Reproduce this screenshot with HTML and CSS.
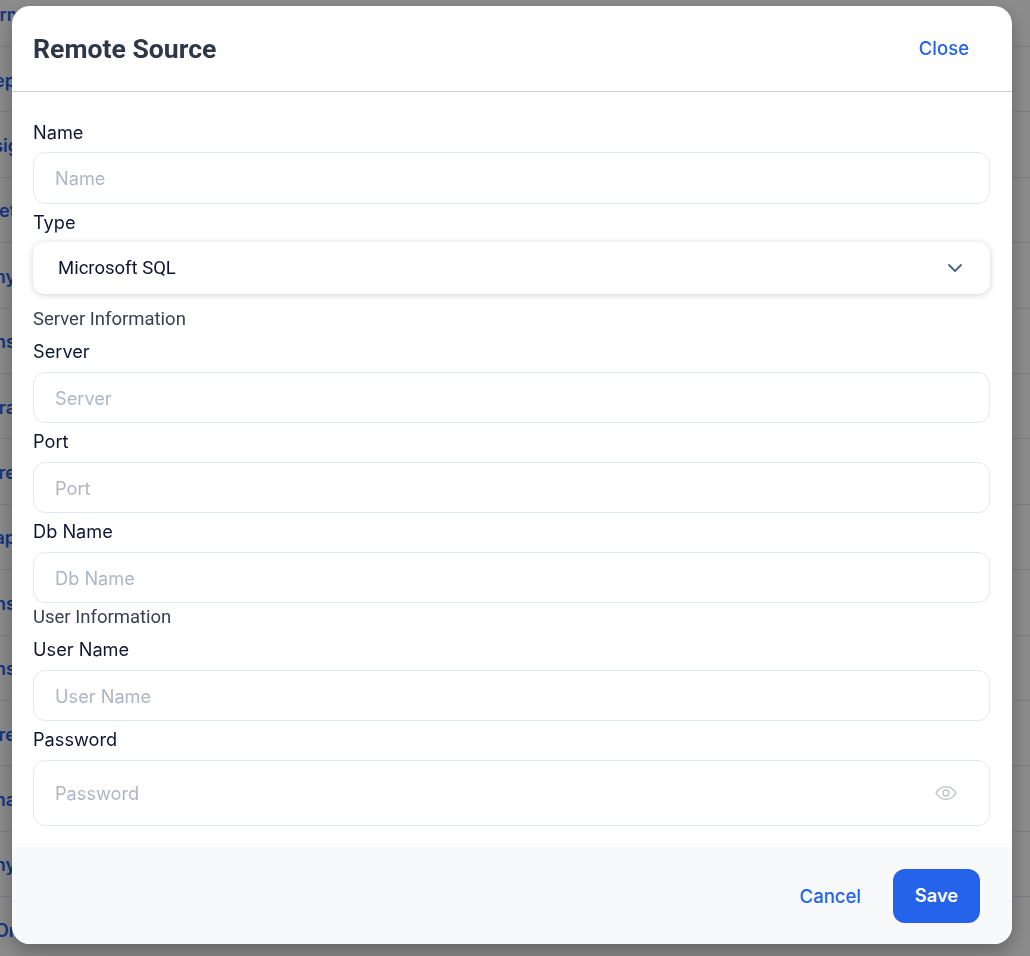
FILE: index.html
```html
<!DOCTYPE html>
<html lang="en">
<head>
    <meta charset="UTF-8">
    <meta name="viewport" content="width=device-width, initial-scale=1.0">
    <title>Remote Source</title>
    <link rel="stylesheet" href="styles.css">
</head>
<body>
    <div class="list">
        <div class="list-row first"><span class="cut">rm</span></div>
        <div class="list-row"><span class="cut">ep</span></div>
        <div class="list-row"><span class="cut wide">sig</span></div>
        <div class="list-row"><span class="cut">et</span></div>
        <div class="list-row"><span class="cut">ny</span></div>
        <div class="list-row"><span class="cut">ns</span></div>
        <div class="list-row"><span class="cut">ra</span></div>
        <div class="list-row"><span class="cut">re</span></div>
        <div class="list-row"><span class="cut">ap</span></div>
        <div class="list-row"><span class="cut">ns</span></div>
        <div class="list-row"><span class="cut">ns</span></div>
        <div class="list-row"><span class="cut">re</span></div>
        <div class="list-row"><span class="cut">na</span></div>
        <div class="list-row"><span class="cut">ny</span></div>
        <div class="list-row"><span class="cut">Or</span></div>
    </div>

    <div class="overlay">
        <div class="modal">
            <div class="modal-header">
                <h2>Remote Source</h2>
                <button class="link close">Close</button>
            </div>
            <div class="modal-body">
                <label class="label">Name</label>
                <input class="field" type="text" placeholder="Name">
                <label class="label">Type</label>
                <div class="select">
                    <span>Microsoft SQL</span>
                    <svg width="16" height="16" viewBox="0 0 16 16" fill="none" stroke="#4a6284" stroke-width="1.8" stroke-linecap="round" stroke-linejoin="round"><path d="M2 5l6 6 6-6"/></svg>
                </div>
                <div class="section">Server Information</div>
                <label class="label">Server</label>
                <input class="field short" type="text" placeholder="Server">
                <label class="label">Port</label>
                <input class="field short" type="text" placeholder="Port">
                <label class="label">Db Name</label>
                <input class="field short" type="text" placeholder="Db Name">
                <div class="section tight">User Information</div>
                <label class="label">User Name</label>
                <input class="field short" type="text" placeholder="User Name">
                <label class="label">Password</label>
                <div class="password">
                    <span>Password</span>
                    <svg width="22" height="16" viewBox="0 0 22 16" fill="none" stroke="#bfc3cb" stroke-width="1.4"><path d="M1 8c2.500-4.200 5.800-6.300 10-6.300S18.500 3.800 21 8c-2.500 4.200-5.800 6.300-10 6.300S3.500 12.200 1 8z"/><circle cx="11" cy="8" r="3"/></svg>
                </div>
            </div>
            <div class="modal-footer">
                <button class="link">Cancel</button>
                <button class="save">Save</button>
            </div>
        </div>
    </div>
</body>
</html>
```

FILE: styles.css
```css
* {
    box-sizing: border-box;
}
body {
    font-family: 'Inter', sans-serif;
    background: #fff;
    margin: 0;
    height: 956px;
    overflow: hidden;
}
.list-row {
    height: 65.4px;
    padding-top: 2px;
    display: flex;
    align-items: center;
    border-bottom: 1px solid #e2e8f0;
    color: #2563eb;
    font-size: 18px;
    font-weight: 600;
    white-space: nowrap;
}
.list-row.first {
    height: 47px;
    padding-top: 0;
    padding-bottom: 17px;
}
.cut {
    width: 16px;
    display: flex;
    justify-content: flex-end;
}
.cut.wide {
    width: 19px;
}
.first .cut {
    width: 23px;
}
.overlay {
    position: fixed;
    inset: 0;
    background: rgba(0, 0, 0, 0.45);
    padding: 6px 18px 12px 12px;
}
.modal {
    width: 1000px;
    height: 938px;
    background: #fff;
    border-radius: 18px;
    overflow: hidden;
    box-shadow: 0 8px 20px rgba(0, 0, 0, 0.3);
    display: flex;
    flex-direction: column;
}
.modal-header {
    height: 86px;
    padding: 0 43px 0 21px;
    display: flex;
    align-items: center;
    justify-content: space-between;
    border-bottom: 1px solid #cbd0d6;
}
.modal-header h2 {
    margin: 0;
    font-family: 'Roboto', sans-serif;
    font-size: 26.6px;
    font-weight: 700;
    color: #2d3748;
}
.link {
    background: transparent;
    border: none;
    padding: 0;
    font-family: inherit;
    font-size: 18.5px;
    font-weight: 550;
    color: #2563eb;
}
.close {
    padding-bottom: 2px;
}
.modal-body {
    flex: 1;
    padding: 28px 22px 0 21px;
}
.label {
    display: block;
    height: 32px;
    line-height: 24px;
    font-size: 18.2px;
    color: #0f1433;
}
.field, .password, .select {
    display: flex;
    width: 100%;
    height: 52px;
    border: 1px solid #e2e8f0;
    border-radius: 12px;
    padding: 0 21px;
    font-family: inherit;
    font-size: 18.2px;
    background: #fff;
    outline: none;
}
.field {
    margin-bottom: 6px;
}
.field.short {
    height: 51px;
    margin-top: 1px;
    padding-top: 1px;
}
.field::placeholder, .password span {
    color: #aeb6c4;
}
.select {
    border: none;
    align-items: center;
    justify-content: space-between;
    padding: 0 27px 0 25px;
    font-family: 'Roboto', sans-serif;
    font-size: 18.5px;
    color: #0f1433;
    box-shadow: 0 1px 6px rgba(0, 0, 0, 0.18);
}
.password {
    height: 66px;
    margin-top: 1px;
    align-items: center;
    justify-content: space-between;
    padding-right: 32px;
}
.section {
    margin-top: 12px;
    height: 33px;
    line-height: 26px;
    font-family: 'Roboto', sans-serif;
    font-size: 18.5px;
    color: #374151;
}
.section.tight {
    margin-top: -4px;
    height: 32px;
    line-height: 24px;
}
.modal-footer {
    height: 97px;
    padding: 0 32px 0 0;
    background: #f8f9fb;
    display: flex;
    align-items: center;
    justify-content: flex-end;
    gap: 32px;
}
.save {
    width: 87px;
    height: 54px;
    padding-bottom: 2px;
    background: #2563eb;
    color: #fff;
    border: none;
    border-radius: 12px;
    font-family: inherit;
    font-size: 18.3px;
    font-weight: 600;
}
```
